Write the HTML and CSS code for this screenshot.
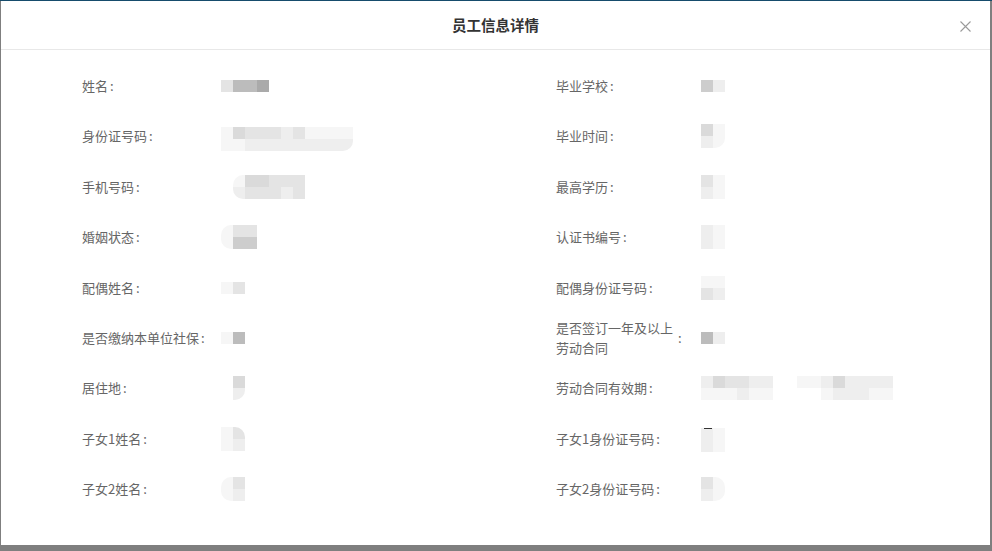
FILE: index.html
```html
<!DOCTYPE html>
<html lang="zh-CN">
<head>
<meta charset="utf-8">
<title>员工信息详情</title>
<link rel="stylesheet" href="styles.css">
</head>
<body>
<div class="page">
  <div class="modal">
    <div class="modal-header">
      <span></span>
      <h1 class="modal-title">员工信息详情</h1>
      <button class="close" aria-label="关闭">
        <svg width="11" height="11" viewBox="0 0 11 11"><path d="M0.5 0.5 L10.5 10.5 M10.5 0.5 L0.5 10.5" stroke="#9a9a9a" stroke-width="1.1" fill="none"/></svg>
      </button>
    </div>
    <div class="modal-body">
      <div class="grid">
        <!-- row 1 -->
        <div class="item left"><div class="label"><span class="ltext">姓名</span><span class="colon">:</span></div>
          <div class="m"><b><i class="g3"></i><i class="g6"></i><i class="g6"></i><i class="g7"></i></b></div></div>
        <div class="item right"><div class="label"><span class="ltext">毕业学校</span><span class="colon">:</span></div>
          <div class="m"><b><i class="g5"></i><i class="g2"></i></b></div></div>
        <!-- row 2 -->
        <div class="item left"><div class="label"><span class="ltext">身份证号码</span><span class="colon">:</span></div>
          <div class="m down rb"><b><i class="g1"></i><i class="g4"></i><i class="g3"></i><i class="g3"></i><i class="g3"></i><i class="g2"></i><i class="g3"></i><i class="g1"></i><i class="g1"></i><i class="g1"></i><i class="g1"></i></b><b><i class="g1"></i><i class="g1"></i><i class="g2"></i><i class="g2"></i><i class="g2"></i><i class="g2"></i><i class="g2"></i><i class="g2"></i><i class="g2"></i><i class="g2"></i><i class="g2"></i></b></div></div>
        <div class="item right"><div class="label"><span class="ltext">毕业时间</span><span class="colon">:</span></div>
          <div class="m rb"><b><i class="g4"></i><i class="g1"></i></b><b><i class="g2"></i><i class="g1"></i></b></div></div>
        <!-- row 3 -->
        <div class="item left"><div class="label"><span class="ltext">手机号码</span><span class="colon">:</span></div>
          <div class="m shift rl"><b><i class="g1"></i><i class="g4"></i><i class="g4"></i><i class="g3"></i><i class="g3"></i><i class="g3"></i></b><b><i class="g2"></i><i class="g3"></i><i class="g3"></i><i class="g3"></i><i class="g2"></i><i class="g3"></i></b></div></div>
        <div class="item right"><div class="label"><span class="ltext">最高学历</span><span class="colon">:</span></div>
          <div class="m"><b><i class="g3"></i><i class="g1"></i></b><b><i class="g2"></i><i class="g1"></i></b></div></div>
        <!-- row 4 -->
        <div class="item left"><div class="label"><span class="ltext">婚姻状态</span><span class="colon">:</span></div>
          <div class="m rl"><b><i class="g1"></i><i class="g3"></i><i class="g3"></i></b><b><i class="g1"></i><i class="g5"></i><i class="g5"></i></b></div></div>
        <div class="item right"><div class="label"><span class="ltext">认证书编号</span><span class="colon">:</span></div>
          <div class="m"><b><i class="g2"></i><i class="g1"></i></b><b><i class="g2"></i><i class="g1"></i></b></div></div>
        <!-- row 5 -->
        <div class="item left"><div class="label"><span class="ltext">配偶姓名</span><span class="colon">:</span></div>
          <div class="m"><b><i class="g1"></i><i class="g3"></i></b></div></div>
        <div class="item right"><div class="label"><span class="ltext">配偶身份证号码</span><span class="colon">:</span></div>
          <div class="m"><b><i class="g1"></i><i class="g1"></i></b><b><i class="g3"></i><i class="g2"></i></b></div></div>
        <!-- row 6 -->
        <div class="item left"><div class="label"><span class="ltext">是否缴纳本单位社保</span><span class="colon">:</span></div>
          <div class="m"><b><i class="g1"></i><i class="g6"></i></b></div></div>
        <div class="item right"><div class="label"><span class="ltext">是否签订一年及以上劳动合同</span><span class="colon">:</span></div>
          <div class="m"><b><i class="g6"></i><i class="g2"></i></b></div></div>
        <!-- row 7 -->
        <div class="item left"><div class="label"><span class="ltext">居住地</span><span class="colon">:</span></div>
          <div class="m rb"><b><i class="g0"></i><i class="g4"></i></b><b><i class="g0"></i><i class="g2"></i></b></div></div>
        <div class="item right"><div class="label"><span class="ltext">劳动合同有效期</span><span class="colon">:</span></div>
          <div class="m"><b><i class="g2"></i><i class="g4"></i><i class="g3"></i><i class="g3"></i><i class="g2"></i><i class="g2"></i><i class="g0"></i><i class="g0"></i><i class="g1"></i><i class="g1"></i><i class="g2"></i><i class="g4"></i><i class="g2"></i><i class="g2"></i><i class="g2"></i><i class="g2"></i></b><b><i class="g1"></i><i class="g1"></i><i class="g1"></i><i class="g2"></i><i class="g1"></i><i class="g1"></i><i class="g0"></i><i class="g0"></i><i class="g0"></i><i class="g0"></i><i class="g1"></i><i class="g2"></i><i class="g2"></i><i class="g2"></i><i class="g1"></i><i class="g1"></i></b></div></div>
        <!-- row 8 -->
        <div class="item left"><div class="label"><span class="ltext">子女1姓名</span><span class="colon">:</span></div>
          <div class="m rt"><b><i class="g1"></i><i class="g3"></i></b><b><i class="g1"></i><i class="g2"></i></b></div></div>
        <div class="item right"><div class="label"><span class="ltext">子女1身份证号码</span><span class="colon">:</span></div>
          <div class="m dash"><b><i class="g2"></i><i class="g1"></i></b><b><i class="g2"></i><i class="g1"></i></b></div></div>
        <!-- row 9 -->
        <div class="item left"><div class="label"><span class="ltext">子女2姓名</span><span class="colon">:</span></div>
          <div class="m rl"><b><i class="g1"></i><i class="g3"></i></b><b><i class="g1"></i><i class="g2"></i></b></div></div>
        <div class="item right"><div class="label"><span class="ltext">子女2身份证号码</span><span class="colon">:</span></div>
          <div class="m rr"><b><i class="g3"></i><i class="g1"></i></b><b><i class="g2"></i><i class="g1"></i></b></div></div>
      </div>
    </div>
  </div>
</div>
</body>
</html>
```

FILE: styles.css
```css
html, body {
  margin: 0;
  padding: 0;
  background: #7f7f7f;
}

body {
  font-family: "Noto Sans CJK SC", "Noto Sans", sans-serif;
}

.page {
  border-top: 1px solid #164c6c;
  padding-left: 1px;
  height: 550px;
  overflow: hidden;
}

.modal {
  width: 989px;
  height: 544px;
  background: #ffffff;
  display: flex;
  flex-direction: column;
}

.modal-header {
  height: 48px;
  border-bottom: 1px solid #e8e8e8;
  display: grid;
  grid-template-columns: 1fr auto 1fr;
  align-items: center;
}

.modal-title {
  margin: 0;
  font-size: 14.5px;
  font-weight: 700;
  color: #333333;
  line-height: 20px;
}

.close {
  justify-self: end;
  margin-right: 19px;
  margin-top: 3px;
  padding: 0;
  border: 0;
  background: transparent;
  width: 11px;
  height: 11px;
  display: flex;
}

.modal-body {
  padding: 10.8px 0 0 81px;
}

.grid {
  display: grid;
  grid-template-columns: 474px 1fr;
  grid-auto-rows: 50.4px;
}

.item {
  display: flex;
  align-items: center;
}

.label {
  display: flex;
  align-items: center;
  font-size: 13px;
  line-height: 20px;
  color: #666666;
  flex: none;
}

.left .label { width: 139px; }
.right .label { width: 145px; }

.ltext {
  max-width: 120px;
}

.colon {
  margin-left: 2px;
}

/* mosaic (redacted values) */
.m {
  display: flex;
  flex-direction: column;
  overflow: hidden;
}

.m b {
  display: flex;
}

.m i {
  width: 12px;
  height: 12px;
  flex: none;
}

.m.down { margin-top: 5px; }
.m.shift { margin-left: 12px; }
.m.rl { border-radius: 10px 0 0 10px; }
.m.rr { border-radius: 0 10px 10px 0; }
.m.rb { border-radius: 0 0 10px 0; }
.m.rt { border-radius: 0 10px 0 0; }
.m.dash { border-top: 2px solid #fff; position: relative; }
.m.dash::before {
  content: "";
  position: absolute;
  left: 3px;
  top: 0;
  width: 8px;
  height: 1px;
  background: #333;
}

.g0 { background: #ffffff; }
.g1 { background: #f6f6f6; }
.g2 { background: #eeeeee; }
.g3 { background: #e4e4e4; }
.g4 { background: #dadada; }
.g5 { background: #cdcdcd; }
.g6 { background: #bcbcbc; }
.g7 { background: #aaaaaa; }
```
